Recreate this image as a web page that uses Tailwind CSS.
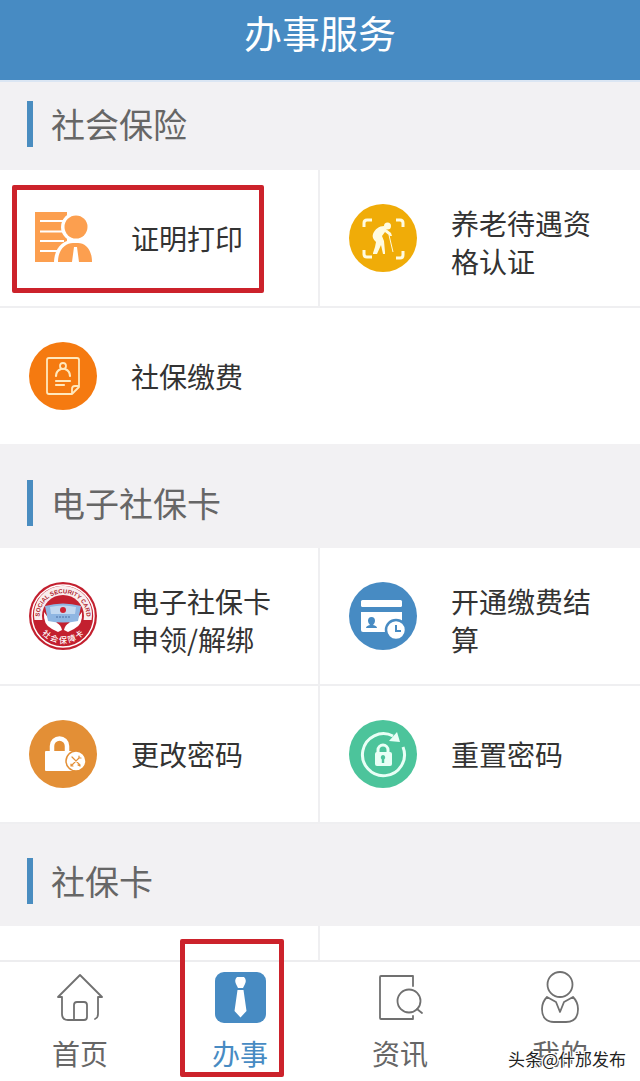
<!DOCTYPE html>
<html lang="zh-CN">
<head>
    <meta charset="UTF-8">
    <meta name="viewport" content="width=device-width, initial-scale=1.0">
    <title>办事服务</title>
    <script src="https://cdn.jsdelivr.net/npm/@tailwindcss/browser@4"></script>
</head>
<body class="relative flex h-screen flex-col overflow-hidden bg-white font-['Noto_Sans_CJK_SC',sans-serif] text-[28px] leading-[38px] text-[#333]">
    <header class="flex h-[82px] shrink-0 items-center justify-center border-b-2 border-[#dbe6f3] bg-[#478bc3] pb-4">
        <h1 class="text-[38px] leading-[56px] text-white">办事服务</h1>
    </header>

    <main class="min-h-0 flex-1 overflow-hidden">
        <!-- 社会保险 -->
        <section>
            <div class="bg-[#f2f1f3] px-[27px] pt-[19px] pb-[23px]">
                <h2 class="border-l-6 border-[#4a8dc0] pl-[18px] text-[34px] leading-[46px] text-[#666]">社会保险</h2>
            </div>
            <div class="grid grid-cols-2">
                <a href="#" class="relative flex h-[138px] items-center gap-[34px] border-r-2 border-b-2 border-[#efeff1] px-[29px]">
                    <svg class="size-[68px] shrink-0" viewBox="0 0 68 68">
                        <path fill="#fc9f4f" d="M6 8h32v50H6z"/>
                        <path stroke="#fff" stroke-width="2.200" d="M11 17h24M11 27.500h24M11 37h24M11 47h24"/>
                        <circle cx="47" cy="23" r="15" fill="#fff"/>
                        <path fill="#fff" d="M25 59c0-15 9-23 19-23v23z"/>
                        <circle cx="47" cy="23" r="11.500" fill="#fc9f4f"/>
                        <path fill="#fc9f4f" d="M29 58c0-13 8-19 15-19h5c7 0 14 6 14 19H50l-2-15h-3l-2 15z"/>
                    </svg>
                    <span>证明打印</span>
                    <!-- 标注框 -->
                    <span class="absolute top-[15px] left-3 h-[108px] w-[252px] rounded-xs border-5 border-[#cc222b]"></span>
                </a>
                <a href="#" class="flex h-[138px] items-center gap-[34px] border-b-2 border-[#efeff1] px-[29px]">
                    <svg class="size-[68px] shrink-0" viewBox="0 0 68 68">
                        <circle cx="34" cy="34" r="34" fill="#f0ac08"/>
                        <path fill="none" stroke="#fffbe0" stroke-width="3" d="M15 23v-4q0-3 3-3h5M47 16h4q3 0 3 3v4M54 47v4q0 3-3 3h-4M23 53h-5q-3 0-3-3v-4"/>
                        <circle cx="38.500" cy="22" r="3.500" fill="#fffbe0"/>
                        <path fill="#fffbe0" d="M35 22c-5 0-9 3-11 8-1 3 0 5 3 8l-1 5-2 6v1h4l4-9 2 9h2v-2l-1-11-2-5 3-4 5 4h2l-1-3-5-4z"/>
                        <path fill="none" stroke="#fffbe0" d="M40 31l4 17"/>
                    </svg>
                    <span class="pt-2">养老待遇资格认证</span>
                </a>
                <a href="#" class="col-span-2 flex h-[138px] items-center gap-[34px] border-b-2 border-[#f2f1f3] px-[29px]">
                    <svg class="size-[68px] shrink-0" viewBox="0 0 68 68">
                        <circle cx="34" cy="34" r="34" fill="#f57a10"/>
                        <g fill="none" stroke="#ffe8bc" stroke-width="1.800" stroke-linecap="round" stroke-linejoin="round">
                            <path d="M20 16h28q2 0 2 2v27l-7 7H20q-2 0-2-2V18q0-2 2-2zM50 44h-4q-3 0-3 3v5"/>
                            <circle cx="34" cy="24" r="3"/>
                            <path d="M27 34q0-5 5-7M41 34q0-5-5-7M27 39h14M27 43h8" stroke-width="2.200"/>
                        </g>
                    </svg>
                    <span>社保缴费</span>
                </a>
            </div>
        </section>

        <!-- 电子社保卡 -->
        <section>
            <div class="bg-[#f2f1f3] px-[27px] pt-[34px] pb-[22px]">
                <h2 class="border-l-6 border-[#4a8dc0] pl-[18px] text-[34px] leading-[46px] text-[#666]">电子社保卡</h2>
            </div>
            <div class="grid grid-cols-2">
                <a href="#" class="flex h-[138px] items-center gap-[34px] border-r-2 border-b-2 border-[#efeff1] px-[29px]">
                    <svg class="size-[68px] shrink-0" viewBox="0 0 68 68">
                        <defs>
                            <path id="arcTop" d="M12 43A23.500 23.500 0 1 1 56 43"/>
                            <path id="arcBottom" d="M6 38A28.500 28.500 0 0 0 62 38"/>
                        </defs>
                        <circle cx="34" cy="34" r="34" fill="#c3202f"/>
                        <circle cx="34" cy="34" r="31" fill="none" stroke="#fff" stroke-width="1.500"/>
                        <path fill="#f9eeee" d="M5.500 38a29 29 0 1 1 57 0z"/>
                        <circle cx="34" cy="34" r="21" fill="#c3202f"/>
                        <path fill="#fff" d="M15 30q-1 13 8 17l6 3 4-2q-1-5-5-7l-4-5-4 1zM53 30q1 13-8 17l-6 3-4-2q1-5 5-7l4-5 4 1z"/>
                        <path fill="#8fb6e2" d="M16 24q18-5 36 0l-3 15q-15 3-30 0z"/>
                        <path fill="#c2d8f0" d="M21 25q13-3 26 0l-1 7H22z"/>
                        <circle cx="34" cy="28" r="3" fill="#cf2434"/>
                        <path stroke="#4a6fa5" d="M27 35h14" stroke-dasharray="2 1"/>
                        <text font-family="Liberation Sans" font-size="6" font-weight="700" fill="#b01f2e"><textPath href="#arcTop" startOffset="50%" text-anchor="middle">SOCIAL SECURITY CARD</textPath></text>
                        <text font-size="8" font-weight="500" fill="#fff"><textPath href="#arcBottom" startOffset="50%" text-anchor="middle">社 会 保 障 卡</textPath></text>
                    </svg>
                    <span class="pt-2">电子社保卡申领/解绑</span>
                </a>
                <a href="#" class="flex h-[138px] items-center gap-[34px] border-b-2 border-[#efeff1] px-[29px]">
                    <svg class="size-[68px] shrink-0" viewBox="0 0 68 68">
                        <circle cx="34" cy="34" r="34" fill="#478bc3"/>
                        <rect x="12" y="18" width="41" height="7" rx="1.500" fill="#fff"/>
                        <path fill="#fff" d="M12 30h41v19q0 1-1 1H14q-2 0-2-2z"/>
                        <path fill="#478bc3" d="M22.500 35q3.500 0 3.500 4 0 2-2 4 4 1 4 3H17q0-2 4-3-2-2-2-4 0-4 3.500-4z"/>
                        <circle cx="47" cy="48" r="10" fill="#fff" stroke="#478bc3" stroke-width="2.500"/>
                        <path fill="none" stroke="#478bc3" stroke-width="2" d="M47 43v6h5"/>
                    </svg>
                    <span class="pt-2">开通缴费结算</span>
                </a>
                <a href="#" class="flex h-[138px] items-center gap-[34px] border-r-2 border-b-2 border-[#efeff1] px-[29px]">
                    <svg class="size-[68px] shrink-0" viewBox="0 0 68 68">
                        <circle cx="34" cy="34" r="34" fill="#e38f36"/>
                        <path fill="none" stroke="#fff" stroke-width="4.500" d="M23 32v-6a7.500 7.500 0 0 1 15 0v6"/>
                        <rect x="16" y="31" width="29" height="20" rx="1" fill="#fff"/>
                        <circle cx="47" cy="41" r="10" fill="#fff" stroke="#e38f36" stroke-width="1.500"/>
                        <path fill="none" stroke="#e38f36" stroke-width="1.200" stroke-linecap="round" d="M43 37l8 8M50 38l-7 7M50 36l0 2 2 0M49 45l2 1M42 44v2h2"/>
                    </svg>
                    <span>更改密码</span>
                </a>
                <a href="#" class="flex h-[138px] items-center gap-[34px] border-b-2 border-[#efeff1] px-[29px]">
                    <svg class="size-[68px] shrink-0" viewBox="0 0 68 68">
                        <circle cx="34" cy="34" r="34" fill="#4cc49b"/>
                        <path fill="none" stroke="#e9fff6" stroke-width="3" d="M54 27a21 21 0 1 1-10-11"/>
                        <path fill="#e9fff6" d="M48 12l3 10-11-1z"/>
                        <path fill="none" stroke="#e9fff6" stroke-width="3" d="M29 33v-3a5 5 0 0 1 10 0v3"/>
                        <rect x="26" y="32" width="17" height="14" rx="2" fill="#e9fff6"/>
                        <path fill="#4cc49b" d="M34 35a2.500 2.500 0 0 1 1.200 4.500V43h-2.400v-3.500A2.500 2.500 0 0 1 34 35z"/>
                    </svg>
                    <span>重置密码</span>
                </a>
            </div>
        </section>

        <!-- 社保卡 -->
        <section>
            <div class="bg-[#f2f1f3] px-[27px] pt-[34px] pb-[22px]">
                <h2 class="border-l-6 border-[#4a8dc0] pl-[18px] text-[34px] leading-[46px] text-[#666]">社保卡</h2>
            </div>
            <div class="grid grid-cols-2">
                <div class="h-[138px] border-r-2 border-[#efeff1]"></div>
                <div class="h-[138px]"></div>
            </div>
        </section>
    </main>

    <nav class="grid h-[121px] shrink-0 grid-cols-4 border-t-2 border-[#ededef] text-[#666]">
        <a href="#" class="flex flex-col items-center gap-2 pt-2">
            <svg class="size-[56px]" viewBox="0 0 56 56" fill="none" stroke="#707070" stroke-width="1.800" stroke-linecap="round" stroke-linejoin="round">
                <path d="M10 27H6L28 5l22 22h-4v17q0 4-3 5M10 27v17q0 6 6 6h16q3 0 3-3V35q0-3-3-3h-7q-3 0-3 3v15"/>
            </svg>
            <span>首页</span>
        </a>
        <a href="#" class="relative flex flex-col items-center gap-2 pt-2 text-[#478bc3]">
            <svg class="size-[56px]" viewBox="0 0 56 56">
                <rect x="3" y="2" width="51" height="51" rx="9" fill="#478bc3"/>
                <path fill="#fff" d="M25 7h7q3 3 1 7l-2 4h-5l-2-4q-2-4 1-7zM25.500 20h6l3 21-6 6.500-6-6.500z"/>
            </svg>
            <span>办事</span>
            <!-- 标注框 -->
            <span class="absolute -top-[23px] left-5 h-[138px] w-[104px] rounded-xs border-5 border-[#cc222b]"></span>
        </a>
        <a href="#" class="flex flex-col items-center gap-2 pt-2">
            <svg class="size-[56px]" viewBox="0 0 56 56" fill="none" stroke="#707070" stroke-width="1.800" stroke-linecap="round" stroke-linejoin="round">
                <path d="M41 16V6H9q-1 0-1 1v41q0 1 1 1h32v-3"/>
                <circle cx="37" cy="31" r="11.500"/>
                <path d="M45 39l5 4"/>
            </svg>
            <span>资讯</span>
        </a>
        <a href="#" class="flex flex-col items-center gap-2 pt-2">
            <svg class="size-[56px]" viewBox="0 0 56 56" fill="none" stroke="#707070" stroke-width="1.800" stroke-linecap="round" stroke-linejoin="round">
                <circle cx="28" cy="14.500" r="12.500"/>
                <path d="M15 27l9 5 4 10 4-10 9-5q5 5 5 12c0 9-5 13-12 13H22c-7 0-12-4-12-13q0-7 5-12z"/>
            </svg>
            <span>我的</span>
        </a>
    </nav>

    <p class="absolute right-[14px] bottom-[10px] text-[17px] leading-6 text-[#222] [text-shadow:-1px_-1px_0_#fff,1px_-1px_0_#fff,-1px_1px_0_#fff,1px_1px_0_#fff]">头条@什邡发布</p>
</body>
</html>
